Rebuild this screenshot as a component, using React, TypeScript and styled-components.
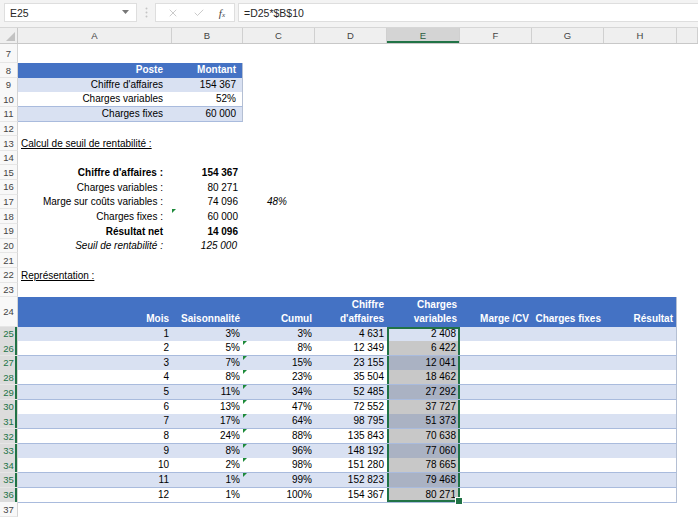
import { FC } from 'react'
import styled, { createGlobalStyle, css } from 'styled-components'
import { X, Check } from 'lucide-react'

type Fill = 'head' | 'band' | 'row'
type Sel = 'active' | 'shade'

interface CellSpec {
  t?: string
  a?: 'l' | 'r' | 'c'
  b?: boolean
  i?: boolean
  u?: boolean
  f?: Fill
  pr?: number
  mark?: boolean
  edge?: boolean
  sel?: Sel
  selTop?: boolean
  selBottom?: boolean
}

interface RowSpec {
  n: number
  h: number
  cells: CellSpec[]
  sel?: boolean
}

const COLS = '18px 154px 71px 72px 72px 73px 72px 72px 73px 1fr'
const RH = 14.65
const GREEN = '#217346'

const GlobalStyle = createGlobalStyle`
  * { box-sizing: border-box; }
  html, body { margin: 0; padding: 0; background: #fff; }
  body {
    width: 698px;
    height: 520px;
    overflow: hidden;
    font-family: "Liberation Sans", Arial, sans-serif;
  }
`

const pad = (cells: CellSpec[]): CellSpec[] => {
  const out = [...cells]
  while (out.length < 9) out.push({})
  return out
}

const months: [string, string, string, string, string][] = [
  ['1', '3%', '3%', '4 631', '2 408'],
  ['2', '5%', '8%', '12 349', '6 422'],
  ['3', '7%', '15%', '23 155', '12 041'],
  ['4', '8%', '23%', '35 504', '18 462'],
  ['5', '11%', '34%', '52 485', '27 292'],
  ['6', '13%', '47%', '72 552', '37 727'],
  ['7', '17%', '64%', '98 795', '51 373'],
  ['8', '24%', '88%', '135 843', '70 638'],
  ['9', '8%', '96%', '148 192', '77 060'],
  ['10', '2%', '98%', '151 280', '78 665'],
  ['11', '1%', '99%', '152 823', '79 468'],
  ['12', '1%', '100%', '154 367', '80 271'],
]

// labels of the upper block sit a little in from the column edge
const label = (t: string, extra: Partial<CellSpec> = {}): CellSpec => ({ t, a: 'r', pr: 9, ...extra })
const value = (t: string, extra: Partial<CellSpec> = {}): CellSpec => ({ t, a: 'r', pr: 6, ...extra })

const rows: RowSpec[] = [
  { n: 7, h: 19, cells: pad([]) },
  {
    n: 8,
    h: RH,
    cells: pad([label('Poste', { f: 'head', b: true }), value('Montant', { f: 'head', b: true, edge: true })]),
  },
  { n: 9, h: RH, cells: pad([label("Chiffre d'affaires", { f: 'band' }), value('154 367', { f: 'band', edge: true })]) },
  { n: 10, h: RH, cells: pad([label('Charges variables', { f: 'row' }), value('52%', { f: 'row', edge: true })]) },
  { n: 11, h: RH, cells: pad([label('Charges fixes', { f: 'band' }), value('60 000', { f: 'band', edge: true })]) },
  { n: 12, h: RH, cells: pad([]) },
  { n: 13, h: RH, cells: pad([{ t: 'Calcul de seuil de rentabilité :', a: 'l', u: true }]) },
  { n: 14, h: RH, cells: pad([]) },
  { n: 15, h: RH, cells: pad([label("Chiffre d'affaires :", { b: true }), value('154 367', { b: true, pr: 5 })]) },
  { n: 16, h: RH, cells: pad([label('Charges variables :'), value('80 271', { pr: 5 })]) },
  {
    n: 17,
    h: RH,
    cells: pad([label('Marge sur coûts variables :'), value('74 096', { pr: 5 }), { t: '48%', a: 'r', i: true, pr: 28 }]),
  },
  { n: 18, h: RH, cells: pad([label('Charges fixes :'), value('60 000', { mark: true, pr: 5 })]) },
  { n: 19, h: RH, cells: pad([label('Résultat net', { b: true }), value('14 096', { b: true, pr: 5 })]) },
  { n: 20, h: RH, cells: pad([label('Seuil de rentabilité :', { i: true }), value('125 000', { i: true })]) },
  { n: 21, h: RH, cells: pad([]) },
  { n: 22, h: RH, cells: pad([{ t: 'Représentation :', a: 'l', u: true }]) },
  { n: 23, h: RH, cells: pad([]) },
  {
    n: 24,
    h: RH * 2,
    cells: pad(
      ['Mois', 'Saisonnalité', 'Cumul', "Chiffre\nd'affaires", 'Charges\nvariables', 'Marge /CV', 'Charges fixes', 'Résultat']
        .map((t, k) => ({ t, a: 'r' as const, f: 'head' as const, b: true, edge: k === 7 }))
    ),
  },
  ...months.map((m, idx): RowSpec => {
    const f: Fill = idx % 2 === 0 ? 'band' : 'row'
    const base = { a: 'r' as const, f }
    return {
      n: 25 + idx,
      h: RH,
      sel: true,
      cells: pad([
        { t: m[0], ...base },
        { t: m[1], ...base },
        { t: m[2], ...base, mark: idx > 0 && idx < 11 },
        { t: m[3], ...base },
        {
          t: m[4],
          ...base,
          pr: 4,
          sel: idx === 0 ? 'active' : 'shade',
          selTop: idx === 0,
          selBottom: idx === 11,
        },
        { ...base },
        { ...base },
        { ...base, edge: true },
      ]),
    }
  }),
  { n: 37, h: RH, cells: pad([]) },
]

const App: FC = () => {
  return (
    <>
      <GlobalStyle />
      <Window>
        <TopBar>
          <NameBox>
            <span>E25</span>
            <svg width="7" height="5" viewBox="0 0 7 5">
              <polygon points="0,0 7,0 3.5,4" fill="#777" />
            </svg>
          </NameBox>
          <Grip>
            <svg width="3" height="11" viewBox="0 0 3 11">
              <circle cx="1.5" cy="1.5" r="1" fill="#c4c4c4" />
              <circle cx="1.5" cy="5.5" r="1" fill="#c4c4c4" />
              <circle cx="1.5" cy="9.5" r="1" fill="#c4c4c4" />
            </svg>
          </Grip>
          <FuncBox>
            <X size={12} strokeWidth={1.4} color="#b4b4b4" />
            <Check size={12} strokeWidth={1.4} color="#b4b4b4" />
            <Fx>
              f<small>x</small>
            </Fx>
          </FuncBox>
          <FormulaBox>=D25*$B$10</FormulaBox>
        </TopBar>

        <HeaderRow>
          <Corner>
            <svg width="9" height="9" viewBox="0 0 9 9">
              <polygon points="9,0 9,9 0,9" fill="#c2c2c2" />
            </svg>
          </Corner>
          {['A', 'B', 'C', 'D', 'E', 'F', 'G', 'H', ''].map(l => (
            <ColHead key={l || 'I'} $sel={l === 'E'}>
              {l}
            </ColHead>
          ))}
        </HeaderRow>

        {rows.map(r => (
          <GridRow key={r.n} $h={r.h}>
            <RowHead $sel={r.sel}>{r.n}</RowHead>
            {r.cells.map((c, k) => (
              <Cell
                key={k}
                $a={c.a || 'l'}
                $b={c.b}
                $i={c.i}
                $u={c.u}
                $f={c.f}
                $pr={c.pr ?? 3}
                $mark={c.mark}
                $edge={c.edge}
                $sel={c.sel}
                $selTop={c.selTop}
                $selBottom={c.selBottom}
              >
                {c.t && <span>{c.t}</span>}
              </Cell>
            ))}
          </GridRow>
        ))}
      </Window>
    </>
  )
}

const Window = styled.div`
  width: 698px;
  height: 520px;
  overflow: hidden;
  background: #fff;
  color: #000;
`

const TopBar = styled.div`
  display: flex;
  align-items: flex-start;
  height: 28px;
  padding: 3px 0 0 4px;
  background: #f3f3f3;
  border-bottom: 1px solid #d6d6d6;
`

const NameBox = styled.div`
  display: flex;
  align-items: center;
  justify-content: space-between;
  width: 133px;
  height: 19px;
  padding: 0 7px 0 5px;
  background: #fff;
  border: 1px solid #dedede;
  font-size: 10.5px;
  color: #262626;
`

const Grip = styled.div`
  display: flex;
  align-items: center;
  justify-content: center;
  width: 18px;
  height: 19px;
`

const FuncBox = styled.div`
  display: flex;
  align-items: center;
  justify-content: space-around;
  width: 80px;
  height: 19px;
  padding: 0 2px 0 4px;
  background: #fff;
  border: 1px solid #dedede;
`

const Fx = styled.span`
  font-family: "Liberation Serif", "Times New Roman", serif;
  font-style: italic;
  font-size: 11px;
  color: #444;

  small {
    font-size: 7px;
  }
`

const FormulaBox = styled.div`
  display: flex;
  align-items: center;
  flex: 1;
  height: 19px;
  margin-left: 3px;
  padding-left: 5px;
  background: #fff;
  border: 1px solid #dedede;
  border-right: none;
  font-size: 10.5px;
  color: #262626;
`

const HeaderRow = styled.div`
  display: grid;
  grid-template-columns: ${COLS};
  height: 16px;
  background: #efefef;
  border-bottom: 1px solid #c8c8c8;
`

const Corner = styled.div`
  display: flex;
  align-items: flex-end;
  justify-content: flex-end;
  padding: 0 2px 2px 0;
  border-right: 1px solid #c8c8c8;
`

const ColHead = styled.div<{ $sel?: boolean }>`
  display: flex;
  align-items: center;
  justify-content: center;
  font-size: 9.5px;
  color: ${p => (p.$sel ? '#2b5c3e' : '#444')};
  background: ${p => (p.$sel ? '#d4d4d4' : 'transparent')};
  border-right: 1px solid #d0d0d0;
  box-shadow: ${p => (p.$sel ? `inset 0 -2px 0 ${GREEN}` : 'none')};
`

const GridRow = styled.div<{ $h: number }>`
  display: grid;
  grid-template-columns: ${COLS};
  height: ${p => p.$h}px;
`

const RowHead = styled.div<{ $sel?: boolean }>`
  display: flex;
  align-items: center;
  justify-content: center;
  font-size: 9.5px;
  color: ${p => (p.$sel ? GREEN : '#444')};
  background: ${p => (p.$sel ? '#dcdcdc' : '#f8f8f8')};
  border-right: 1px solid #d4d4d4;
  border-bottom: 1px solid #e6e6e6;
  box-shadow: ${p => (p.$sel ? `inset -2px 0 0 ${GREEN}` : 'none')};
`

const fillColor = (f?: Fill, sel?: Sel) => {
  if (sel === 'shade') return f === 'band' ? '#aab2c3' : '#c8c8c8'
  if (f === 'head') return '#4472c4'
  if (f === 'band') return '#d9e1f2'
  if (f === 'row') return '#fff'
  return 'transparent'
}

interface CellProps {
  $a: 'l' | 'r' | 'c'
  $b?: boolean
  $i?: boolean
  $u?: boolean
  $f?: Fill
  $pr: number
  $mark?: boolean
  $edge?: boolean
  $sel?: Sel
  $selTop?: boolean
  $selBottom?: boolean
}

const Cell = styled.div<CellProps>`
  position: relative;
  display: flex;
  align-items: flex-end;
  justify-content: ${p => (p.$a === 'r' ? 'flex-end' : p.$a === 'c' ? 'center' : 'flex-start')};
  padding: 0 ${p => p.$pr}px 1px 3px;
  font-size: 10px;
  line-height: 13px;
  white-space: nowrap;
  font-weight: ${p => (p.$b ? 700 : 400)};
  font-style: ${p => (p.$i ? 'italic' : 'normal')};
  color: ${p => (p.$f === 'head' ? '#fff' : '#000')};
  background: ${p => fillColor(p.$f, p.$sel)};

  span {
    white-space: pre-line;
    text-align: right;
    text-decoration: ${p => (p.$u ? 'underline' : 'none')};
    line-height: ${p => (p.$f === 'head' ? '14px' : '13px')};
  }

  ${p =>
    (p.$f === 'band' || p.$f === 'row') &&
    css`
      border-bottom: 1px solid #a9bbdd;
    `}

  ${p =>
    p.$edge &&
    css`
      border-right: 1px solid #b4bfd3;
    `}

  ${p =>
    p.$sel &&
    css`
      box-shadow: inset 2px 0 0 ${GREEN}, inset -2px 0 0 ${GREEN}
        ${p.$selTop ? `, inset 0 2px 0 ${GREEN}` : ''}
        ${p.$selBottom ? `, inset 0 -2px 0 ${GREEN}` : ''};
    `}

  ${p =>
    p.$selBottom &&
    css`
      &::after {
        content: '';
        position: absolute;
        right: -3px;
        bottom: -3px;
        width: 6px;
        height: 6px;
        background: ${GREEN};
        border: 1px solid #fff;
        z-index: 2;
      }
    `}

  ${p =>
    p.$mark &&
    css`
      &::before {
        content: '';
        position: absolute;
        top: 0;
        left: 0;
        border-top: 4px solid #1d8a3a;
        border-right: 4px solid transparent;
        z-index: 1;
      }
    `}
`

export default App
